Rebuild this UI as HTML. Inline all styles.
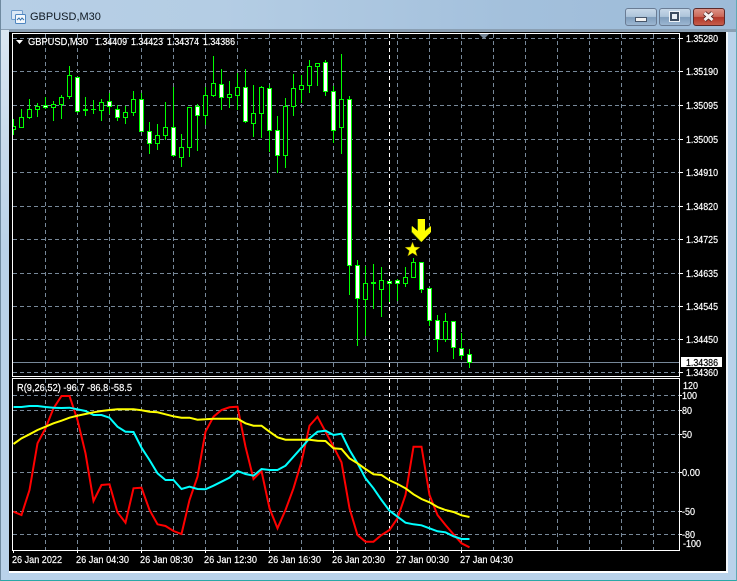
<!DOCTYPE html>
<html><head><meta charset="utf-8"><style>
html,body{margin:0;padding:0;background:#b9d1ea}
#w{position:relative;width:737px;height:581px;overflow:hidden;background:#b9d2ea;font-family:"Liberation Sans",sans-serif}
#tb{position:absolute;left:0;top:0;width:737px;height:32px;background:linear-gradient(90deg,#b7cfe6 0,#b4cde4 30%,#a3c0dc 70%,#9dbbd8 100%)}
#tl{position:absolute;left:0;top:29px;width:737px;height:3px;background:#8a9fb3}
#lb{position:absolute;left:1px;top:30px;width:8px;height:551px;background:linear-gradient(180deg,#dbe7f2 0,#c9dbec 20%,#b9d2ea 40%)}
#edge{position:absolute;left:0;top:0;width:737px;height:581px;box-sizing:border-box;border:1px solid #6f8aa0;border-bottom-color:#2aa7a7;border-right-color:#5fa9b5;border-top:0}
#t{position:absolute;left:30px;top:10px;font-size:11px;line-height:15px;color:#0f1822;letter-spacing:0}
.b{position:absolute;top:8px;height:18px;box-sizing:border-box;border:1px solid #6a7c94;border-radius:3px}
#b1{left:625px;width:32px;background:linear-gradient(180deg,#c6d7e8 0,#adc4da 48%,#7f9dbc 52%,#9cb7d2 100%)}
#b2{left:659px;width:32px;background:linear-gradient(180deg,#c6d7e8 0,#adc4da 48%,#7f9dbc 52%,#9cb7d2 100%)}
#b3{left:693px;width:32px;border-color:#5c2a2a;background:linear-gradient(180deg,#dc9386 0,#cb6758 48%,#b23628 52%,#c55c4b 100%)}
#i1{position:absolute;left:9px;top:8px;width:10px;height:3px;background:#f2f2f2;border:1px solid #48566a}
#i2{position:absolute;left:10px;top:3px;width:9px;height:9px;box-sizing:border-box;border:2px solid #3c4c60;background:#e8eef4;box-shadow:0 0 0 1px #eef3f8}
#c{position:absolute;left:9px;top:32px;width:718px;height:540px;background:#000}
#wl{position:absolute;left:9px;top:571px;width:719px;height:2px;background:#fff}
#wr{position:absolute;left:726px;top:32px;width:2px;height:540px;background:#f2f6fa}
svg{position:absolute;left:0;top:0}
text{font-family:"Liberation Sans",sans-serif;font-size:10.5px;fill:#fff;stroke:#fff;stroke-width:.2}
</style></head><body><div id="w">
<div id="tb"></div><div id="tl"></div><div id="lb"></div>
<div id="t">GBPUSD,M30</div>
<svg width="30" height="30" style="left:0;top:0"><rect x="11.5" y="10.5" width="11" height="9" rx="1" fill="#dbe8f6" stroke="#6f9ccc"/><rect x="15.5" y="14.5" width="10" height="9" rx="1" fill="#f4f8fc" stroke="#4f86c0"/><path d="M17 20l2-2 1.500 2 1.500-2 2 2" fill="none" stroke="#3672ad"/></svg>
<div class="b" id="b1"><div id="i1"></div></div>
<div class="b" id="b2"><div id="i2"></div></div>
<div class="b" id="b3"><svg width="30" height="16"><path d="M10.500 4l8 7M18.500 4l-8 7" stroke="#4a2020" stroke-width="4.500"/><path d="M10.500 4l8 7M18.500 4l-8 7" stroke="#f4efee" stroke-width="3"/></svg></div>
<div id="c"></div><div id="wr"></div><div id="wl"></div>
<svg width="737" height="581" viewBox="0 0 737 581">
<g>
<path fill="none" stroke="#778899" stroke-dasharray="4 3" d="M13 38.500H679M13 71.500H679M13 105.500H679M13 139.500H679M13 172.500H679M13 206.500H679M13 239.500H679M13 273.500H679M13 306.500H679M13 339.500H679M13 372.500H679M13 395.500H679M13 410.500H679M13 434.500H679M13 472.500H679M13 511.500H679M13 534.500H679"/>
<path fill="none" stroke="#778899" stroke-dasharray="4 3" d="M45.500 34V376M77.500 34V376M109.500 34V376M141.500 34V376M173.500 34V376M205.500 34V376M237.500 34V376M269.500 34V376M301.500 34V376M333.500 34V376M365.500 34V376M397.500 34V376M429.500 34V376M461.500 34V376M493.500 34V376M525.500 34V376M557.500 34V376M589.500 34V376M621.500 34V376M653.500 34V376M45.500 379V550M77.500 379V550M109.500 379V550M141.500 379V550M173.500 379V550M205.500 379V550M237.500 379V550M269.500 379V550M301.500 379V550M333.500 379V550M365.500 379V550M397.500 379V550M429.500 379V550M461.500 379V550M493.500 379V550M525.500 379V550M557.500 379V550M589.500 379V550M621.500 379V550M653.500 379V550"/>
<path fill="none" stroke="#fff" stroke-dasharray="4 3" d="M389.500 34V376M389.500 379V550"/>
<path fill="none" stroke="#778899" d="M13 362.500H680"/>
<path fill="none" stroke="#00ff00" d="M13.500 119V135M21.500 109V128M29.500 99V119M37.500 103V117M45.500 97V109M53.500 101V121M61.500 95V119M69.500 66V99M77.500 77V113M85.500 97V116M93.500 100V114M101.500 99V121M109.500 93V114M117.500 105V121M125.500 106V124M133.500 91V116M141.500 93V132M149.500 122V154M157.500 124V150M165.500 102V140M173.500 87V157M181.500 134V167M189.500 107V157M197.500 104V151M205.500 87V125M213.500 56V97M221.500 69V110M229.500 81V108M237.500 73V110M245.500 69V123M253.500 85V137M261.500 86V138M269.500 85V152M277.500 116V173M285.500 98V168M293.500 74V116M301.500 75V103M309.500 60V93M317.500 63V86M325.500 60V96M333.500 86V143M341.500 54V154M349.500 96V295M357.500 260V346M365.500 266V336M373.500 264V309M381.500 267V317M389.500 281V302M397.500 279V301M405.500 267V287M413.500 258V277M421.500 262V293M429.500 288V326M437.500 315V352M445.500 313V342M453.500 321V359M461.500 333V359M469.500 349V368M91 109.500H96"/>
<path fill="#000" stroke="#00ff00" d="M13 126.500H15.500V129.500H13M19.500 117.500h4V127.500h-4zM27.500 109.500h4V117.500h-4zM35.500 106.500h4V109.500h-4zM51.500 104.500h4V107.500h-4zM59.500 97.500h4V104.500h-4zM67.500 75.500h4V96.500h-4zM99.500 102.500h4V110.500h-4zM123.500 112.500h4V117.500h-4zM131.500 99.500h4V112.500h-4zM155.500 135.500h4V143.500h-4zM163.500 127.500h4V135.500h-4zM179.500 147.500h4V157.500h-4zM187.500 107.500h4V147.500h-4zM203.500 95.500h4V115.500h-4zM211.500 83.500h4V95.500h-4zM227.500 94.500h4V97.500h-4zM235.500 87.500h4V95.500h-4zM251.500 113.500h4V123.500h-4zM259.500 87.500h4V113.500h-4zM283.500 106.500h4V155.500h-4zM291.500 88.500h4V106.500h-4zM299.500 85.500h4V89.500h-4zM307.500 66.500h4V85.500h-4zM315.500 63.500h4V66.500h-4zM339.500 99.500h4V127.500h-4zM363.500 283.500h4V299.500h-4zM371.500 282.500h4V283.500h-4zM379.500 280.500h4V289.500h-4zM403.500 277.500h4V283.500h-4zM411.500 262.500h4V277.500h-4zM443.500 321.500h4V339.500h-4z"/>
<path fill="#fff" stroke="#00ff00" d="M43.500 105.500h4V107.500h-4zM75.500 77.500h4V111.500h-4zM83.500 109.500h4V110.500h-4zM107.500 101.500h4V106.500h-4zM115.500 109.500h4V117.500h-4zM139.500 99.500h4V131.500h-4zM147.500 131.500h4V143.500h-4zM171.500 127.500h4V155.500h-4zM195.500 106.500h4V115.500h-4zM219.500 84.500h4V97.500h-4zM243.500 87.500h4V121.500h-4zM267.500 88.500h4V130.500h-4zM275.500 130.500h4V155.500h-4zM323.500 62.500h4V91.500h-4zM331.500 91.500h4V130.500h-4zM347.500 99.500h4V265.500h-4zM355.500 265.500h4V298.500h-4zM387.500 281.500h4V283.500h-4zM395.500 280.500h4V283.500h-4zM419.500 262.500h4V289.500h-4zM427.500 288.500h4V320.500h-4zM435.500 320.500h4V339.500h-4zM451.500 321.500h4V347.500h-4zM459.500 348.500h4V355.500h-4zM467.500 354.500h4V362.500h-4z"/>
</g>
<polyline fill="none" stroke="#ff0000" stroke-width="2" points="13.500,511.700 21.500,515 29.500,490 37.500,443.300 45.500,428.300 53.500,408.300 61.500,396 69.500,396 77.500,420 85.500,453.300 93.500,501 101.500,485 109.500,484.300 117.500,512.300 125.500,522.700 133.500,488.300 141.500,487.700 149.500,510 157.500,524.300 165.500,526 173.500,531 181.500,534 189.500,500 197.500,476.700 205.500,431.700 213.500,416.700 221.500,410 229.500,407.300 237.500,406.700 245.500,446.700 253.500,479 261.500,471 269.500,508.300 277.500,528.300 285.500,510 293.500,488.300 301.500,461.700 309.500,425.700 317.500,416.700 325.500,431.700 333.500,446.700 341.500,462.300 349.500,508.300 357.500,535 365.500,541.700 373.500,541.700 381.500,535 389.500,530 397.500,518.300 405.500,495 413.500,446.700 421.500,446.700 429.500,495 437.500,515 445.500,525 453.500,534.300 461.500,543.300 469.500,547.300"/>
<polyline fill="none" stroke="#00ffff" stroke-width="2" points="13.500,407 21.500,407 29.500,406 37.500,406 45.500,407 53.500,407.700 61.500,408 69.500,407.700 77.500,409.300 85.500,411 93.500,415 101.500,415 109.500,417.700 117.500,426.700 125.500,431.700 133.500,432 141.500,447.700 149.500,460 157.500,473.300 165.500,480 173.500,480 181.500,489 189.500,486.700 197.500,489 205.500,489.300 213.500,485.700 221.500,481.700 229.500,477.700 237.500,471 245.500,474 253.500,475.700 261.500,469 269.500,470 277.500,470 285.500,465.700 293.500,456.700 301.500,447.700 309.500,438.300 317.500,431.700 325.500,430.700 333.500,435 341.500,433.700 349.500,450 357.500,463.300 365.500,478.300 373.500,488.300 381.500,500 389.500,510.700 397.500,516.700 405.500,522.700 413.500,524.300 421.500,525.300 429.500,528.300 437.500,531.300 445.500,532.300 453.500,536.300 461.500,539 469.500,539"/>
<polyline fill="none" stroke="#ffff00" stroke-width="2" points="13.500,444 21.500,438.300 29.500,434.300 37.500,430 45.500,426.700 53.500,423.300 61.500,420.700 69.500,417.700 77.500,415.700 85.500,414 93.500,412.300 101.500,411 109.500,410 117.500,409.300 125.500,409.300 133.500,409.300 141.500,410.300 149.500,411.700 157.500,412.300 165.500,414.300 173.500,416.300 181.500,417.700 189.500,417.700 197.500,419.700 205.500,419.300 213.500,418.700 221.500,418.700 229.500,418.700 237.500,418.700 245.500,423.300 253.500,425.700 261.500,425.700 269.500,431.700 277.500,437.300 285.500,439.700 293.500,439.700 301.500,439.700 309.500,439.700 317.500,440.700 325.500,441 333.500,448.300 341.500,449 349.500,458.300 357.500,463.300 365.500,469 373.500,474.300 381.500,475 389.500,480.300 397.500,484 405.500,488.300 413.500,494.300 421.500,499 429.500,502.300 437.500,507 445.500,510 453.500,512 461.500,515.300 469.500,517"/>
<g fill="none" stroke="#fff">
<path d="M12.500 33.500H679.500V376.500H12.500zM12.500 378.500H679.500V550.500H12.500z"/>
<path d="M680 38.500h3M680 71.500h3M680 105.500h3M680 139.500h3M680 172.500h3M680 206.500h3M680 239.500h3M680 273.500h3M680 306.500h3M680 339.500h3M680 372.500h3M680 395.500h2M680 410.500h2M680 434.500h2M680 472.500h2M680 511.500h2M680 534.500h2M13.500 551v2M77.500 551v2M141.500 551v2M205.500 551v2M269.500 551v2M333.500 551v2M397.500 551v2M461.500 551v2"/>
</g>
<polygon points="479,34 489,34 484,39" fill="#778899"/>
<polygon points="16,40 23,40 19.500,44" fill="#fff"/>
<polygon points="417,219 424,219 424,231 430,226 430,232 420.500,242 411,232 411,226 417,231" fill="#2f5a00"/>
<polygon points="418,219 425,219 425,231 431,226 431,232 421.500,242 412,232 412,226 418,231" fill="#ffff00"/>
<polygon points="412.500,242 414.500,247 420,247.300 415.700,250.700 417.200,256 412.500,253 407.800,256 409.300,250.700 405,247.300 410.500,247" fill="#ffff00" stroke="#7a6a00" stroke-width=".5"/>
<rect x="681" y="357" width="41" height="10" fill="#fff"/>
<text x="28" y="45" textLength="60" lengthAdjust="spacingAndGlyphs">GBPUSD,M30</text>
<text x="95" y="45" textLength="32" lengthAdjust="spacingAndGlyphs">1.34409</text>
<text x="131" y="45" textLength="32" lengthAdjust="spacingAndGlyphs">1.34423</text>
<text x="167" y="45" textLength="32" lengthAdjust="spacingAndGlyphs">1.34374</text>
<text x="203" y="45" textLength="32" lengthAdjust="spacingAndGlyphs">1.34386</text>
<text x="17" y="391" textLength="115" lengthAdjust="spacingAndGlyphs">R(9,26,52) -96.7 -86.8 -58.5</text>
<text x="686" y="42" textLength="32" lengthAdjust="spacingAndGlyphs">1.35280</text>
<text x="686" y="75" textLength="32" lengthAdjust="spacingAndGlyphs">1.35190</text>
<text x="686" y="109" textLength="32" lengthAdjust="spacingAndGlyphs">1.35095</text>
<text x="686" y="143" textLength="32" lengthAdjust="spacingAndGlyphs">1.35005</text>
<text x="686" y="176" textLength="32" lengthAdjust="spacingAndGlyphs">1.34910</text>
<text x="686" y="210" textLength="32" lengthAdjust="spacingAndGlyphs">1.34820</text>
<text x="686" y="243" textLength="32" lengthAdjust="spacingAndGlyphs">1.34725</text>
<text x="686" y="277" textLength="32" lengthAdjust="spacingAndGlyphs">1.34635</text>
<text x="686" y="310" textLength="32" lengthAdjust="spacingAndGlyphs">1.34545</text>
<text x="686" y="343" textLength="32" lengthAdjust="spacingAndGlyphs">1.34450</text>
<text x="686" y="366" textLength="32" lengthAdjust="spacingAndGlyphs" style="fill:#000;stroke:#000">1.34386</text>
<text x="686" y="376" textLength="32" lengthAdjust="spacingAndGlyphs">1.34360</text>
<text x="683" y="389" textLength="15" lengthAdjust="spacingAndGlyphs">120</text>
<text x="682" y="399" textLength="15" lengthAdjust="spacingAndGlyphs">100</text>
<text x="682" y="414" textLength="10" lengthAdjust="spacingAndGlyphs">80</text>
<text x="682" y="438" textLength="10" lengthAdjust="spacingAndGlyphs">50</text>
<text x="682" y="476" textLength="18" lengthAdjust="spacingAndGlyphs">0.00</text>
<text x="682" y="515" textLength="13" lengthAdjust="spacingAndGlyphs">-50</text>
<text x="682" y="538" textLength="13" lengthAdjust="spacingAndGlyphs">-80</text>
<text x="683" y="547" textLength="18" lengthAdjust="spacingAndGlyphs">-100</text>
<text x="12" y="563" textLength="50" lengthAdjust="spacingAndGlyphs">26 Jan 2022</text>
<text x="76" y="563" textLength="53" lengthAdjust="spacingAndGlyphs">26 Jan 04:30</text>
<text x="140" y="563" textLength="53" lengthAdjust="spacingAndGlyphs">26 Jan 08:30</text>
<text x="204" y="563" textLength="53" lengthAdjust="spacingAndGlyphs">26 Jan 12:30</text>
<text x="268" y="563" textLength="53" lengthAdjust="spacingAndGlyphs">26 Jan 16:30</text>
<text x="332" y="563" textLength="53" lengthAdjust="spacingAndGlyphs">26 Jan 20:30</text>
<text x="396" y="563" textLength="53" lengthAdjust="spacingAndGlyphs">27 Jan 00:30</text>
<text x="460" y="563" textLength="53" lengthAdjust="spacingAndGlyphs">27 Jan 04:30</text>
</svg>
<div id="edge"></div>
</div></body></html>
